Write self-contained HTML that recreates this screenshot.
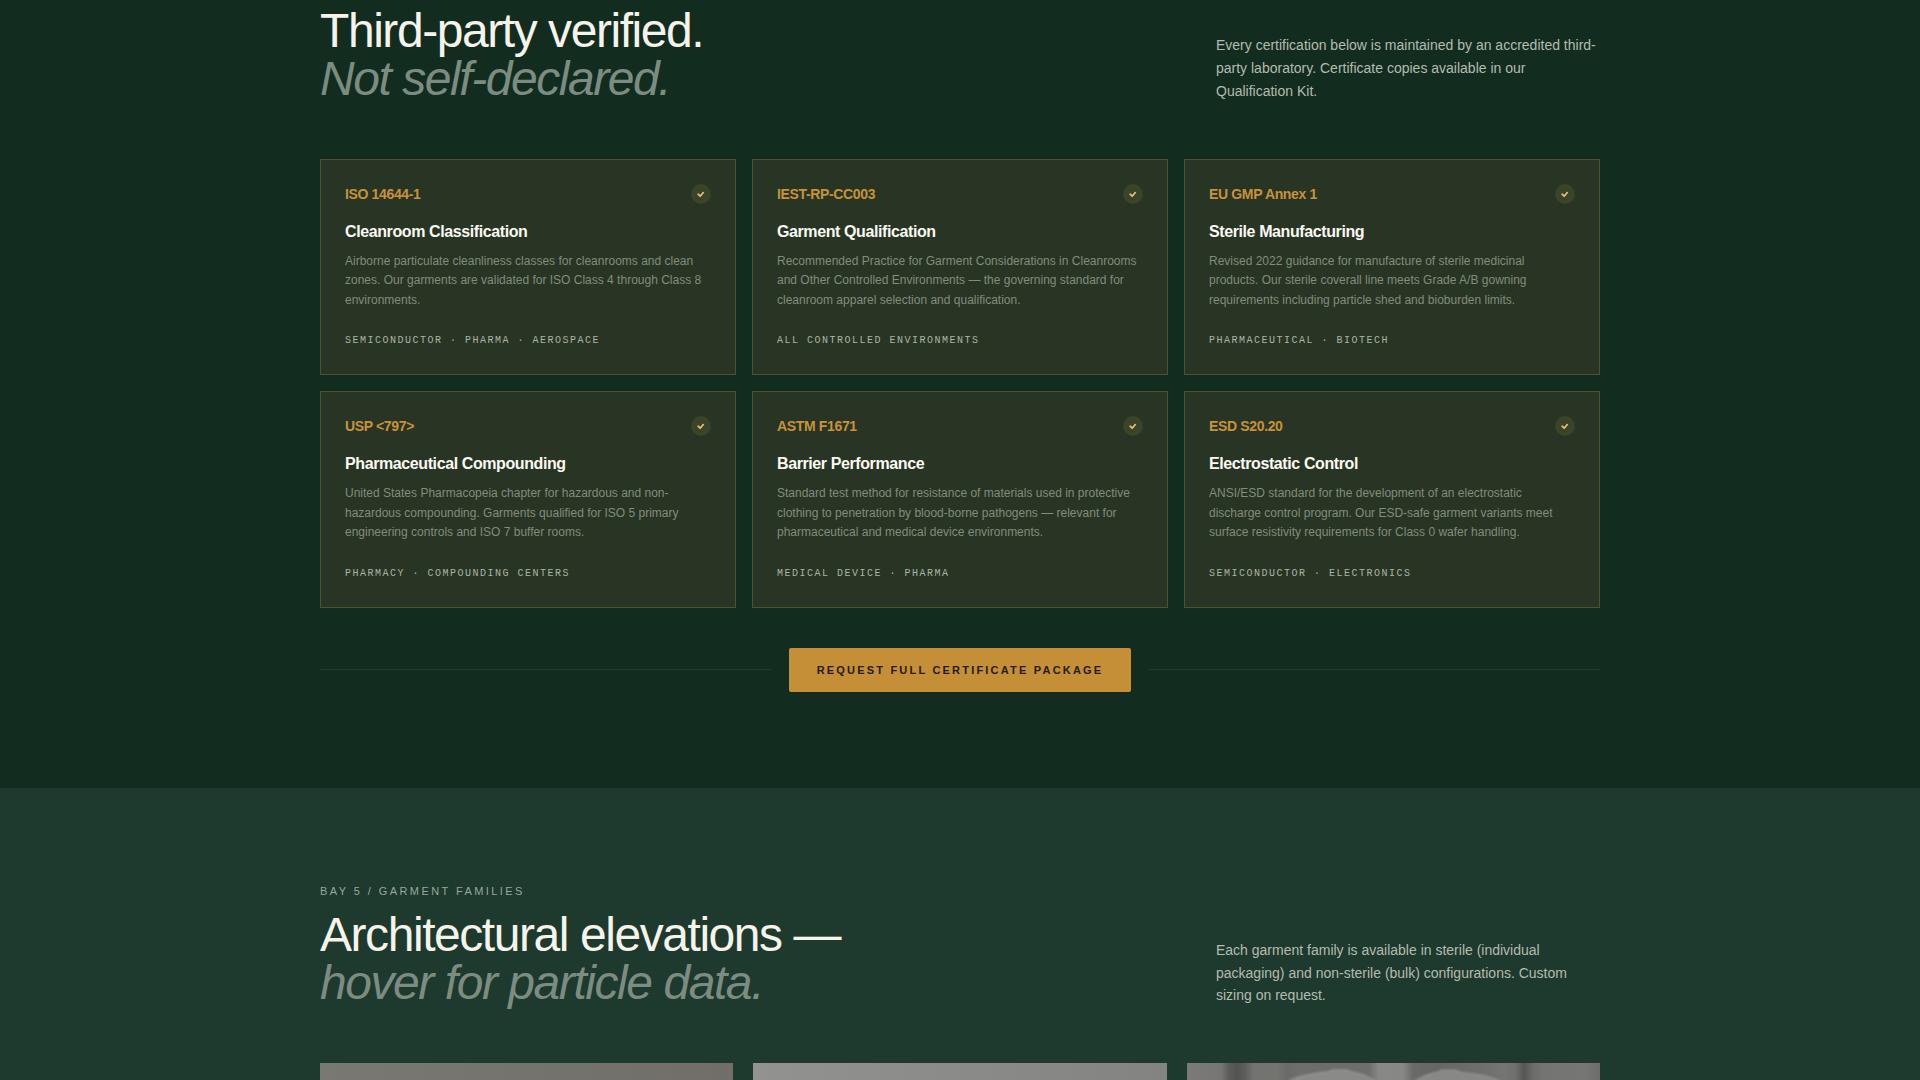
<!DOCTYPE html>
<html lang="en">
<head>
<meta charset="utf-8">
<title>Certifications</title>
<style>
*{box-sizing:border-box;margin:0;padding:0}
html,body{width:1920px;height:1080px;overflow:hidden;background:#132c20}
body{font-family:"Liberation Sans",sans-serif;color:#f4f1e8;position:relative}
.wrap{width:1280px;margin:0 auto;position:relative}
.s1{position:absolute;left:0;top:0;width:1920px;height:788px;background:#132c20}
.s2{position:absolute;left:0;top:788px;width:1920px;height:292px;background:#1e392e}
.head{position:absolute;left:320px;width:1280px}
h2{font-weight:400;font-size:48px;line-height:48px;letter-spacing:-1.44px;color:#f6f3ea;white-space:nowrap}
h2 em{display:block;font-style:italic;color:#7c8c80}
.lead{position:absolute;left:1216px;width:390px;font-size:14px;line-height:22.75px;color:#b4bcaf}
.grid{position:absolute;left:320px;top:159px;width:1280px;display:grid;grid-template-columns:repeat(3,416px);grid-auto-rows:216.4px;gap:16px}
.card{background:#283424;border:1px solid #4e5130;padding:24px;position:relative}
.code{font-size:14px;font-weight:700;color:#c8923a;line-height:20.4px;letter-spacing:-0.35px}
.chk{position:absolute;right:24px;top:24px;width:20px;height:20px;border-radius:50%;background:#3b4428}
.chk svg{position:absolute;left:0;top:0}
.ttl{margin-top:17.6px;font-size:16px;font-weight:700;line-height:20.8px;color:#fbf9f2;letter-spacing:-0.4px}
.desc{margin-top:9px;font-size:12px;line-height:19.5px;color:#828d7c}
.tags{position:absolute;left:24px;bottom:24.17px;font-family:"Liberation Mono",monospace;font-size:10px;line-height:18px;letter-spacing:1.5px;color:#abb4a4;white-space:nowrap;text-transform:uppercase}
.cta{position:absolute;left:320px;top:648px;width:1280px;height:44px}
.cta i{position:absolute;top:21px;height:1px;background:#243a2f;display:block}
.btn{position:absolute;left:469px;top:0;width:342px;height:44px;background:#c48f36;border-radius:2px;color:#241b0d;font-size:11px;font-weight:700;letter-spacing:2.2px;text-align:center;line-height:44px;white-space:nowrap}
.eyebrow{position:absolute;left:320px;top:884px;font-size:11px;line-height:14px;letter-spacing:2.42px;color:#98a89b;white-space:nowrap}
.tile{position:absolute;top:1063px;height:20px;width:413px}
</style>
</head>
<body>
<div class="s1"></div>
<div class="s2"></div>

<div class="head" style="top:7px">
  <h2>Third-party verified.<em>Not self-declared.</em></h2>
</div>
<p class="lead" style="top:34px">Every certification below is maintained by an accredited third-party laboratory. Certificate copies available in our Qualification Kit.</p>

<div class="grid">
  <div class="card"><div class="code">ISO 14644-1</div><div class="chk"><svg width="20" height="20" viewBox="0 0 20 20"><path d="M7.1 10.2L9.2 12.2L12.3 8.6" fill="none" stroke="#ecc67c" stroke-width="1.6" stroke-linecap="round" stroke-linejoin="round"/></svg></div><div class="ttl">Cleanroom Classification</div><div class="desc">Airborne particulate cleanliness classes for cleanrooms and clean zones. Our garments are validated for ISO Class 4 through Class 8 environments.</div><div class="tags">Semiconductor &middot; Pharma &middot; Aerospace</div></div>
  <div class="card"><div class="code">IEST-RP-CC003</div><div class="chk"><svg width="20" height="20" viewBox="0 0 20 20"><path d="M7.1 10.2L9.2 12.2L12.3 8.6" fill="none" stroke="#ecc67c" stroke-width="1.6" stroke-linecap="round" stroke-linejoin="round"/></svg></div><div class="ttl">Garment Qualification</div><div class="desc">Recommended Practice for Garment Considerations in Cleanrooms and Other Controlled Environments — the governing standard for cleanroom apparel selection and qualification.</div><div class="tags">All controlled environments</div></div>
  <div class="card"><div class="code">EU GMP Annex 1</div><div class="chk"><svg width="20" height="20" viewBox="0 0 20 20"><path d="M7.1 10.2L9.2 12.2L12.3 8.6" fill="none" stroke="#ecc67c" stroke-width="1.6" stroke-linecap="round" stroke-linejoin="round"/></svg></div><div class="ttl">Sterile Manufacturing</div><div class="desc">Revised 2022 guidance for manufacture of sterile medicinal products. Our sterile coverall line meets Grade A/B gowning requirements including particle shed and bioburden limits.</div><div class="tags">Pharmaceutical &middot; Biotech</div></div>
  <div class="card"><div class="code">USP &lt;797&gt;</div><div class="chk"><svg width="20" height="20" viewBox="0 0 20 20"><path d="M7.1 10.2L9.2 12.2L12.3 8.6" fill="none" stroke="#ecc67c" stroke-width="1.6" stroke-linecap="round" stroke-linejoin="round"/></svg></div><div class="ttl">Pharmaceutical Compounding</div><div class="desc">United States Pharmacopeia chapter for hazardous and non-hazardous compounding. Garments qualified for ISO 5 primary engineering controls and ISO 7 buffer rooms.</div><div class="tags">Pharmacy &middot; Compounding centers</div></div>
  <div class="card"><div class="code">ASTM F1671</div><div class="chk"><svg width="20" height="20" viewBox="0 0 20 20"><path d="M7.1 10.2L9.2 12.2L12.3 8.6" fill="none" stroke="#ecc67c" stroke-width="1.6" stroke-linecap="round" stroke-linejoin="round"/></svg></div><div class="ttl">Barrier Performance</div><div class="desc">Standard test method for resistance of materials used in protective clothing to penetration by blood-borne pathogens — relevant for pharmaceutical and medical device environments.</div><div class="tags">Medical device &middot; Pharma</div></div>
  <div class="card"><div class="code">ESD S20.20</div><div class="chk"><svg width="20" height="20" viewBox="0 0 20 20"><path d="M7.1 10.2L9.2 12.2L12.3 8.6" fill="none" stroke="#ecc67c" stroke-width="1.6" stroke-linecap="round" stroke-linejoin="round"/></svg></div><div class="ttl">Electrostatic Control</div><div class="desc">ANSI/ESD standard for the development of an electrostatic discharge control program. Our ESD-safe garment variants meet surface resistivity requirements for Class 0 wafer handling.</div><div class="tags">Semiconductor &middot; Electronics</div></div>
</div>

<div class="cta">
  <i style="left:0;width:452px"></i>
  <div class="btn">REQUEST FULL CERTIFICATE PACKAGE</div>
  <i style="left:828px;width:452px"></i>
</div>

<div class="eyebrow">BAY 5 / GARMENT FAMILIES</div>
<div class="head" style="top:911px">
  <h2>Architectural elevations —<em>hover for particle data.</em></h2>
</div>
<p class="lead" style="top:938.88px">Each garment family is available in sterile (individual packaging) and non-sterile (bulk) configurations. Custom sizing on request.</p>

<div class="tile" style="left:320px;background:linear-gradient(90deg,#797873,#716e69)"></div>
<div class="tile" style="left:753px;width:414px;background:linear-gradient(90deg,#929290,#838381)"></div>
<svg class="tile" style="left:1186.67px;width:413.33px" width="413.33" height="20" viewBox="0 0 413.33 20" preserveAspectRatio="none"><defs><linearGradient id="g3" x1="0" x2="1" y1="0" y2="0"><stop offset="0.0000" stop-color="#7c7a78"/><stop offset="0.0823" stop-color="#787674"/><stop offset="0.1016" stop-color="#5c5c5a"/><stop offset="0.1210" stop-color="#535351"/><stop offset="0.1403" stop-color="#5d5d5b"/><stop offset="0.1597" stop-color="#727270"/><stop offset="0.2177" stop-color="#747471"/><stop offset="0.2419" stop-color="#6a6a68"/><stop offset="0.2710" stop-color="#6e6e6c"/><stop offset="0.3629" stop-color="#6c6c6a"/><stop offset="0.4400" stop-color="#6e6e6c"/><stop offset="0.4645" stop-color="#888886"/><stop offset="0.5226" stop-color="#878785"/><stop offset="0.5468" stop-color="#6a6a68"/><stop offset="0.6048" stop-color="#666664"/><stop offset="0.7258" stop-color="#70706e"/><stop offset="0.7694" stop-color="#757573"/><stop offset="0.7960" stop-color="#6e6e6c"/><stop offset="0.8153" stop-color="#555553"/><stop offset="0.8371" stop-color="#6b6b69"/><stop offset="0.8613" stop-color="#747472"/><stop offset="0.9629" stop-color="#767674"/><stop offset="1.0000" stop-color="#6c6c6a"/></linearGradient><filter id="b3" x="-10%" y="-50%" width="120%" height="200%"><feGaussianBlur stdDeviation="0.9"/></filter></defs><rect width="413.33" height="20" fill="url(#g3)"/><g filter="url(#b3)"><path d="M99 20Q110 12 140 9L147 7L160 7L164 9Q182 11.5 189 20Z" fill="#8a8a88" stroke="#949492" stroke-width="1.4"/><path d="M226 20Q236 11.5 251 9.2L255 7.2L268 7.2L274 9.4Q304 12 316 20Z" fill="#888886" stroke="#929290" stroke-width="1.4"/></g></svg>
</body>
</html>
